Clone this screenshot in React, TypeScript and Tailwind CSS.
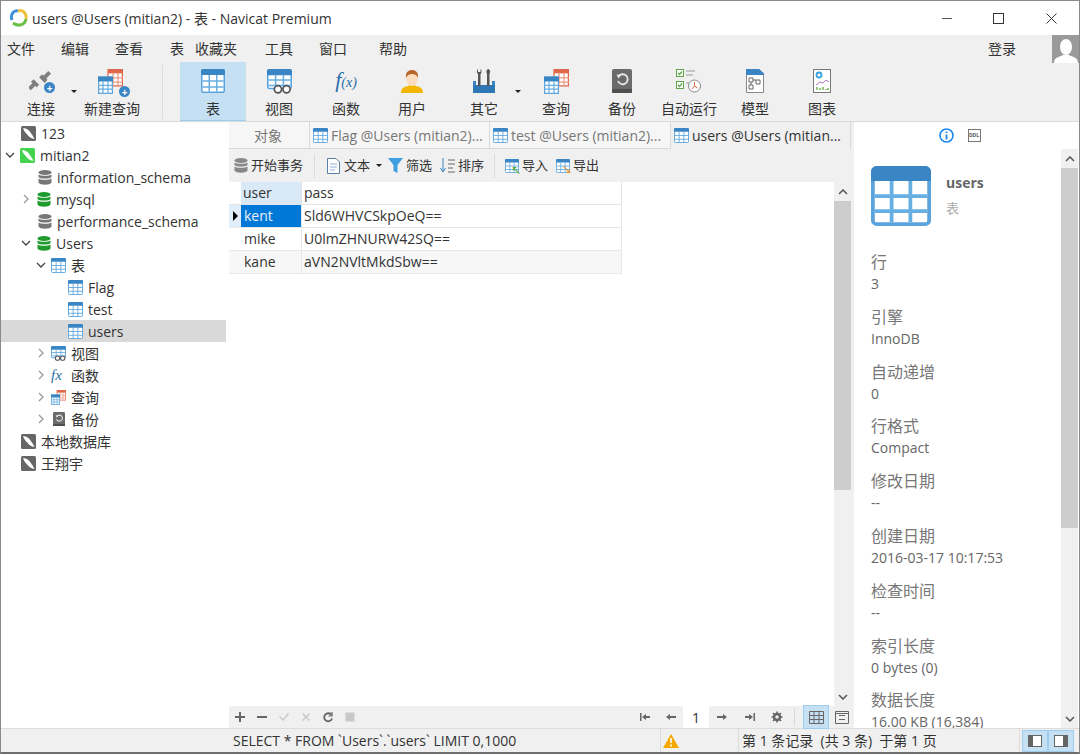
import { ReactNode } from "react";

// table grid icon, used in the tree, tabs, toolbar and info panel
function TableIcon({ size = 16, className = "" }: { size?: number; className?: string }) {
	return (
		<svg width={size} height={size} viewBox="0 0 16 16" className={className}>
			<rect x="0.5" y="0.5" width="15" height="15" rx="1" fill="#fff" stroke="#5ba3dc" />
			<path d="M0 1.5A1.5 1.5 0 0 1 1.5 0h13A1.5 1.5 0 0 1 16 1.5V4H0z" fill="#3a85c4" />
			<path d="M1 8h14M1 12h14M5.5 4v11M10.5 4v11" stroke="#67aee3" strokeWidth="1" />
		</svg>
	);
}

function ConnIcon({ on = false }: { on?: boolean }) {
	return (
		<svg width="15" height="15" viewBox="0 0 15 15">
			<rect width="15" height="15" rx="1.5" fill={on ? "#45d34f" : "#666"} />
			<path d="M2 2c4 .5 6 2 7.500 4.500 1 1.500 2.500 3 4 6.500-3-.5-5-1.500-6.500-3.500C5.500 7.500 3 6 2 2z" fill="#fff" />
		</svg>
	);
}

function DbIcon({ color }: { color: string }) {
	return (
		<svg width="14" height="15" viewBox="0 0 14 15">
			<ellipse cx="7" cy="2.500" rx="6.500" ry="2.500" fill={color} />
			<path d="M.5 4.500C2 6.300 12 6.300 13.500 4.500V7C12 9 2 9 .5 7z" fill={color} />
			<path d="M.5 8.500C2 10.300 12 10.300 13.500 8.500V12.500C12 15.500 2 15.500 .5 12.500z" fill={color} />
		</svg>
	);
}

function Chevron({ open = false }: { open?: boolean }) {
	return (
		<svg width="10" height="10" viewBox="0 0 10 10" fill="none" stroke={open ? "#444" : "#999"} strokeWidth="1.3">
			{open ? <path d="M1 3l4 4 4-4" /> : <path d="M3 1l4 4-4 4" />}
		</svg>
	);
}

function ViewIcon({ size = 16 }: { size?: number }) {
	return (
		<svg width={size} height={size} viewBox="0 0 16 16">
			<rect x="0.5" y="0.500" width="15" height="12" rx="1" fill="#fff" stroke="#5ba3dc" />
			<path d="M0 1.500A1.500 1.500 0 0 1 1.500 0h13A1.500 1.500 0 0 1 16 1.500V4H0z" fill="#3a85c4" />
			<path d="M1 7h14M1 10.500h14M5.500 4v9M10.500 4v9" stroke="#67aee3" />
			<circle cx="7" cy="13" r="2.300" fill="#fff" stroke="#555" strokeWidth="1.100" />
			<circle cx="12.500" cy="13" r="2.300" fill="#fff" stroke="#555" strokeWidth="1.100" />
		</svg>
	);
}

function QueryIcon({ size = 16 }: { size?: number }) {
	return (
		<svg width={size} height={size} viewBox="0 0 20 20">
			<rect x="8" y="0.500" width="11.500" height="13" fill="#fff" stroke="#e0684a" />
			<rect x="8" y="0" width="12" height="3.500" fill="#e0684a" />
			<path d="M8 7h12M8 10.500h12M12 3v10M16 3v10" stroke="#eb9a84" />
			<rect x="0.500" y="6.500" width="11" height="13" fill="#fff" stroke="#5ba3dc" />
			<rect x="0" y="6" width="12" height="4" fill="#3a85c4" />
			<path d="M0 13h12M0 16h12M4 10v10M8 10v10" stroke="#67aee3" />
		</svg>
	);
}

function BackupIcon({ size = 16 }: { size?: number }) {
	return (
		<svg width={size} height={size * 1.2} viewBox="0 0 20 24">
			<rect width="20" height="24" rx="2" fill="#6b6b6b" />
			<rect y="20" width="20" height="4" rx="1" fill="#4f4f4f" />
			<path d="M6.500 7.500A5 5 0 1 1 6 12" fill="none" stroke="#e8e8e8" strokeWidth="1.800" />
			<path d="M4.500 5.500l4.500.5-2.500 3.500z" fill="#e8e8e8" />
		</svg>
	);
}

function Plus() {
	return <span className="absolute -right-1 -bottom-1 flex h-[11px] w-[11px] items-center justify-center rounded-full bg-[#3a85c4] text-[10px] leading-none font-bold text-white">+</span>;
}

const big: Record<string, ReactNode> = {
	conn: (
		<span className="relative block h-6 w-6">
			<svg width="24" height="24" viewBox="0 0 24 24">
				<path d="M21 1l-5 5-2-1-3 3 6 6 3-3-1-2 5-5zM2 22l5-5 1 2 3-3-6-6-3 3 2 1-5 5z" fill="#7f7f7f" transform="translate(0 1) scale(.92)" />
			</svg>
			<span className="absolute -right-[2px] bottom-0 flex h-[11px] w-[11px] items-center justify-center rounded-full bg-[#3a85c4] text-[10px] leading-none font-bold text-white">+</span>
		</span>
	),
	newq: (
		<span className="relative block h-6 w-7">
			<QueryIcon size={25} />
			<Plus />
		</span>
	),
	table: <TableIcon size={24} />,
	view: <ViewIcon size={25} />,
	func: <span className="font-['Liberation_Serif',serif] text-[22px] leading-6 text-[#2b6ea8] italic">f<span className="text-[14px]">(x)</span></span>,
	user: (
		<svg width="24" height="24" viewBox="0 0 24 24">
			<path d="M1 24c0-5 3-6 7-7l2-1h4l2 1c4 1 7 2 7 7z" fill="#f2b705" />
			<ellipse cx="12" cy="9.500" rx="6" ry="7.500" fill="#fcdcbf" />
			<path d="M6 9C5 3 9 1 12 1s7 2 6 8c-1-3-3-4-6-4S7 6 6 9z" fill="#b8652a" />
		</svg>
	),
	other: (
		<svg width="22" height="24" viewBox="0 0 22 24">
			<path d="M0 12h3v5h16v-5h3v12H0z" fill="#3a85c4" />
			<rect x="0" y="16" width="22" height="8" fill="#2f78b5" />
			<path d="M6 0v3h-1V0C3.500 1 3.500 4 5 5v12h2.500V5C9 4 9 1 7.500 0v3H6z" fill="#555" />
			<path d="M15 0c-2 1-2 3-1 5v12h2.500V5c1-2 1-4-1-5z" fill="#555" />
		</svg>
	),
	query: <QueryIcon size={25} />,
	backup: <BackupIcon size={20} />,
	auto: (
		<svg width="26" height="24" viewBox="0 0 26 24">
			<rect x="0.500" y="0.500" width="7" height="7" fill="#fff" stroke="#5ba545" />
			<path d="M2 4l1.500 1.500L6 2.500" fill="none" stroke="#5ba545" strokeWidth="1.300" />
			<rect x="0.500" y="12.500" width="7" height="7" fill="#fff" stroke="#5ba545" />
			<path d="M2 16l1.500 1.500L6 14.500" fill="none" stroke="#5ba545" strokeWidth="1.300" />
			<path d="M10 2h9M10 6h7M10 14h3" stroke="#999" strokeWidth="1.200" />
			<circle cx="18.500" cy="17" r="6" fill="#fff" stroke="#888" />
			<path d="M18.500 13v4l-2.500 3M18.500 17l3 2" fill="none" stroke="#d9603f" />
		</svg>
	),
	model: (
		<svg width="18" height="24" viewBox="0 0 18 24">
			<path d="M.5.500H13l4.500 4v19H.5z" fill="#fff" stroke="#888" />
			<path d="M0 0h13l5 4.500V6H0z" fill="#3a85c4" />
			<path d="M3 9h4v4H3zM10 11h4v4h-4zM3 16h4v4H3zM7 11h3M5 13v3" fill="none" stroke="#666" />
		</svg>
	),
	chart: (
		<svg width="18" height="24" viewBox="0 0 18 24">
			<rect x="0.500" y="0.500" width="17" height="23" fill="#fff" stroke="#777" />
			<circle cx="6" cy="6" r="2.500" fill="none" stroke="#39a0dc" strokeWidth="1.800" />
			<path d="M3 16l4-3 3 1 3-3 3 2" fill="none" stroke="#b777c9" />
			<path d="M4 18v3M7 19v2M10 18v3M13 20v1M15 19v2" stroke="#69b04a" strokeWidth="1.400" />
		</svg>
	),
};

const toolbar = [
	{ id: "conn", label: "连接", className: "ml-[7px]" },
	{ id: "newq", label: "新建查询", className: "ml-[5px]" },
	{ id: "table", label: "表", className: "ml-[35px] bg-[#c5dff3] border-b border-[#9fcdf0]" },
	{ id: "view", label: "视图", className: "" },
	{ id: "func", label: "函数", className: "ml-px" },
	{ id: "user", label: "用户", className: "" },
	{ id: "other", label: "其它", className: "ml-[6px]" },
	{ id: "query", label: "查询", className: "ml-[6px]" },
	{ id: "backup", label: "备份", className: "" },
	{ id: "auto", label: "自动运行", className: "ml-px" },
	{ id: "model", label: "模型", className: "" },
	{ id: "chart", label: "图表", className: "ml-px" },
];

const menus = [
	{ label: "文件", className: "ml-[6px] w-[54px]" },
	{ label: "编辑", className: "w-[54px]" },
	{ label: "查看", className: "w-[55px]" },
	{ label: "表", className: "w-[25px]" },
	{ label: "收藏夹", className: "w-[70px]" },
	{ label: "工具", className: "w-[54px]" },
	{ label: "窗口", className: "w-[60px]" },
	{ label: "帮助", className: "" },
];

type TreeRow = { label: string; indent: string; chevron?: "open" | "closed"; chevX?: string; icon: ReactNode; selected?: boolean };

const tree: TreeRow[] = [
	{ label: "123", indent: "pl-[20px]", icon: <ConnIcon /> },
	{ label: "mitian2", indent: "pl-[3px]", chevron: "open", icon: <ConnIcon on /> },
	{ label: "information_schema", indent: "pl-[36px]", icon: <DbIcon color="#777" /> },
	{ label: "mysql", indent: "pl-[19px]", chevron: "closed", icon: <DbIcon color="#1f9a2c" /> },
	{ label: "performance_schema", indent: "pl-[36px]", icon: <DbIcon color="#777" /> },
	{ label: "Users", indent: "pl-[19px]", chevron: "open", icon: <DbIcon color="#1f9a2c" /> },
	{ label: "表", indent: "pl-[34px]", chevron: "open", icon: <TableIcon size={15} /> },
	{ label: "Flag", indent: "pl-[67px]", icon: <TableIcon size={15} /> },
	{ label: "test", indent: "pl-[67px]", icon: <TableIcon size={15} /> },
	{ label: "users", indent: "pl-[67px]", icon: <TableIcon size={15} />, selected: true },
	{ label: "视图", indent: "pl-[34px]", chevron: "closed", icon: <ViewIcon size={15} /> },
	{ label: "函数", indent: "pl-[34px]", chevron: "closed", icon: <span className="w-[15px] font-['Liberation_Serif',serif] text-[15px] leading-none text-[#2b6ea8] italic">fx</span> },
	{ label: "查询", indent: "pl-[34px]", chevron: "closed", icon: <QueryIcon size={15} /> },
	{ label: "备份", indent: "pl-[34px]", chevron: "closed", icon: <BackupIcon size={12} /> },
	{ label: "本地数据库", indent: "pl-[20px]", icon: <ConnIcon /> },
	{ label: "王翔宇", indent: "pl-[20px]", icon: <ConnIcon /> },
];

const rows = [
	{ user: "kent", pass: "Sld6WHVCSkpOeQ==" },
	{ user: "mike", pass: "U0lmZHNURW42SQ==" },
	{ user: "kane", pass: "aVN2NVltMkdSbw==" },
];

const info = [
	["行", "3"],
	["引擎", "InnoDB"],
	["自动递增", "0"],
	["行格式", "Compact"],
	["修改日期", "--"],
	["创建日期", "2016-03-17 10:17:53"],
	["检查时间", "--"],
	["索引长度", "0 bytes (0)"],
	["数据长度", "16.00 KB (16,384)"],
];

function Scrollbar({ thumb }: { thumb: string }) {
	return (
		<div className="flex w-[17px] shrink-0 flex-col bg-[#f0f0f0]">
			<div className="flex h-[19px] shrink-0 items-center justify-center">
				<svg width="10" height="6" viewBox="0 0 10 6" fill="none" stroke="#555" strokeWidth="1.500"><path d="M1 5l4-4 4 4" /></svg>
			</div>
			<div className={`${thumb} shrink-0 bg-[#cdcdcd]`} />
			<div className="flex-1" />
			<div className="flex h-[19px] shrink-0 items-center justify-center">
				<svg width="10" height="6" viewBox="0 0 10 6" fill="none" stroke="#555" strokeWidth="1.500"><path d="M1 1l4 4 4-4" /></svg>
			</div>
		</div>
	);
}

function SmallTool({ children, label, className = "" }: { children?: ReactNode; label: string; className?: string }) {
	return (
		<div className={`flex items-center gap-[3px] ${className}`}>
			{children}
			<span>{label}</span>
		</div>
	);
}

function Glyph({ d, className = "" }: { d: string; className?: string }) {
	return (
		<svg width="14" height="14" viewBox="0 0 14 14" className={className}>
			<path d={d} fill="currentColor" />
		</svg>
	);
}

export default function App() {
	return (
		<div className="flex h-[754px] w-[1080px] flex-col overflow-hidden border-t border-r border-l border-[#8a8a8a] border-b-2 border-b-[#6e6e6e] bg-[#f0f0f0] font-['Open_Sans','Noto_Sans_CJK_SC',sans-serif] text-[14px] text-[#333]">
			{/* title bar */}
			<div className="flex h-[34px] shrink-0 items-center bg-white pl-[8px]">
				<svg width="20" height="20" viewBox="0 0 20 20" fill="none" strokeWidth="3">
					<path d="M3 12C1 6 5 2 9 3" stroke="#3f8fe0" />
					<path d="M9 3c5-2 9 3 8 8" stroke="#f0c23c" />
					<path d="M17 11c-1 6-8 8-13 4" stroke="#6cc04a" />
				</svg>
				<span className="ml-[3px] text-[14px] text-[#333]">users @Users (mitian2) - 表 - Navicat Premium</span>
				<div className="ml-auto flex items-center">
					<div className="mr-[41px] h-px w-[10px] bg-[#555]" />
					<div className="mr-[42px] h-[11px] w-[11px] border border-[#333]" />
					<svg width="11" height="11" viewBox="0 0 11 11" stroke="#333" className="mr-[22px]"><path d="M.5.500l10 10M10.500.500l-10 10" /></svg>
				</div>
			</div>

			{/* menu */}
			<div className="relative flex h-[27px] shrink-0 items-center">
				{menus.map((m) => (
					<span key={m.label} className={m.className}>{m.label}</span>
				))}
				<span className="ml-auto mr-[36px]">登录</span>
				<div className="flex h-[28px] w-[27px] items-end justify-center overflow-hidden bg-[#9a9a9a]">
					<svg width="24" height="26" viewBox="0 0 24 26" fill="#fff"><ellipse cx="12" cy="10" rx="6" ry="8" /><path d="M0 26c0-6 6-6 9-8h6c3 2 9 2 9 8z" /></svg>
				</div>
			</div>

			{/* big toolbar */}
			<div className="relative flex h-[60px] shrink-0 items-stretch border-b border-[#d9d9d9]">
				{toolbar.map((t) => (
					<div key={t.id} className={`flex w-[66px] shrink-0 flex-col items-center ${t.className}`}>
						<div className="mt-[6px] flex h-[26px] items-center justify-center">{big[t.id]}</div>
						<span className="mt-[5px] text-[14px] leading-5 whitespace-nowrap">{t.label}</span>
					</div>
				))}
				<span className="absolute top-[28px] left-[70px] h-0 w-0 border-x-[3px] border-t-[3px] border-x-transparent border-t-[#222]" />
				<span className="absolute top-[28px] left-[514px] h-0 w-0 border-x-[3px] border-t-[3px] border-x-transparent border-t-[#222]" />
				<span className="absolute top-[3px] left-[161px] h-[54px] w-px bg-[#dcdcdc]" />
			</div>

			<div className="flex min-h-0 flex-1">
				{/* connection tree */}
				<div className="w-[225px] shrink-0 bg-white">
					{tree.map((r) => (
						<div key={r.label + r.indent} className={`flex h-[22px] items-center ${r.indent} ${r.selected ? "bg-[#d9d9d9]" : ""}`}>
							{r.chevron && <span className="mr-[5px] flex w-[11px] justify-center"><Chevron open={r.chevron === "open"} /></span>}
							<span className="flex w-[15px] shrink-0 justify-center">{r.icon}</span>
							<span className={`ml-[5px] whitespace-nowrap text-[#333] ${r.chevron && r.indent === "pl-[34px]" ? "ml-[5px]" : ""}`}>{r.label}</span>
						</div>
					))}
				</div>

				{/* main */}
				<div className="flex w-[628px] shrink-0 flex-col border-l-[3px] border-white">
					<div className="flex h-[27px] shrink-0 bg-[#f0f0f0] pr-[3px]">
						<div className="flex w-[80px] items-center justify-center border-b border-[#d9d9d9] bg-[#f6f6f6] pr-[2px] text-[#777]">对象</div>
						<div className="flex w-[180px] items-center gap-[3px] border-b border-l border-[#d9d9d9] bg-[#f6f6f6] pl-[3px] text-[#777]">
							<TableIcon size={15} />
							<span className="whitespace-nowrap">Flag @Users (mitian2)...</span>
						</div>
						<div className="flex w-[181px] items-center gap-[3px] border-b border-l border-[#d9d9d9] bg-[#f6f6f6] pl-[3px] text-[#777]">
							<TableIcon size={15} />
							<span className="whitespace-nowrap">test @Users (mitian2)...</span>
						</div>
						<div className="flex flex-1 items-center gap-[3px] border-r border-l border-[#d9d9d9] pl-[3px] text-[#333]">
							<TableIcon size={15} />
							<span className="whitespace-nowrap">users @Users (mitian...</span>
						</div>
					</div>

					<div className="flex h-[33px] shrink-0 items-center bg-[#f0f0f0] pl-[5px] text-[13px]">
						<SmallTool label="开始事务">
							<DbIcon color="#888" />
						</SmallTool>
						<span className="mx-[11px] h-[24px] w-px bg-[#dcdcdc]" />
						<SmallTool label="文本">
							<svg width="15" height="16" viewBox="0 0 15 16" fill="#fff" stroke="#5b7fa6"><path d="M1.500.500H10l3.500 3.500v11.500h-12z" /><path d="M4 6h7M4 9h7M4 12h5" stroke="#8fb3d6" /></svg>
						</SmallTool>
						<span className="mx-[6px] h-0 w-0 border-x-[3px] border-t-[3px] border-x-transparent border-t-[#222]" />
						<SmallTool label="筛选" className="mr-[8px]">
							<svg width="15" height="15" viewBox="0 0 15 15" fill="#3f9fe0"><path d="M0 0h15L9.500 7v8l-4-2V7z" /></svg>
						</SmallTool>
						<SmallTool label="排序">
							<svg width="15" height="15" viewBox="0 0 15 15" fill="none"><path d="M3 0v13M.5 10L3 14l2.500-4" stroke="#3a85c4" /><path d="M8 2h7M8 6h7M8 10h5M8 14h7" stroke="#666" /></svg>
						</SmallTool>
						<span className="mx-[10px] h-[24px] w-px bg-[#dcdcdc]" />
						<SmallTool label="导入" className="mr-[8px]">
							<span className="relative block"><TableIcon size={14} /><span className="absolute -right-[2px] -bottom-[2px] text-[10px] leading-none font-bold text-[#57a639]">↖</span></span>
						</SmallTool>
						<SmallTool label="导出">
							<span className="relative block"><TableIcon size={14} /><span className="absolute -right-[2px] -bottom-[2px] text-[10px] leading-none font-bold text-[#e8912d]">↘</span></span>
						</SmallTool>
					</div>

					{/* data grid */}
					<div className="flex min-h-0 flex-1 bg-white">
						<div className="min-w-0 flex-1">
							<div className="grid w-[393px] grid-cols-[12px_60px_321px] text-[14px] leading-[22px]">
								<div className="h-[23px] border-b border-[#e4e4e4]" />
								<div className="h-[23px] border-b border-[#e4e4e4] bg-[#d9e9f7] pl-[2px]">user</div>
								<div className="h-[23px] border-r border-b border-l border-[#e4e4e4] pl-[2px]">pass</div>
								{rows.map((r, i) => (
									<div key={r.user} className="contents">
										<div className={`flex h-[23px] items-center border-b border-[#e8e8e8] ${i === 0 ? "bg-[#e1eef9]" : i === 2 ? "bg-[#f7f7f7]" : ""}`}>
											{i === 0 && <span className="ml-[4px] h-0 w-0 border-y-[5px] border-l-[5px] border-y-transparent border-l-black" />}
										</div>
										<div className={`h-[23px] border-b border-[#e8e8e8] pl-[3px] ${i === 0 ? "bg-[#0078d7] text-[#e8f2fb]" : i === 2 ? "bg-[#f7f7f7]" : ""}`}>{r.user}</div>
										<div className={`h-[23px] border-r border-b border-l border-[#e8e8e8] pl-[2px] ${i === 2 ? "bg-[#f7f7f7]" : ""}`}>{r.pass}</div>
									</div>
								))}
							</div>
						</div>
						<Scrollbar thumb="h-[289px]" />
						<div className="w-[3px] bg-[#f0f0f0]" />
					</div>

					<div className="relative flex h-[22px] shrink-0 items-center bg-[#f0f0f0] text-[#666]">
						<div className="flex items-center gap-[8px] pl-[4px]">
							<Glyph d="M6 2h2v4h4v2H8v4H6V8H2V6h4z" />
							<Glyph d="M2 6h10v2H2z" />
							<Glyph className="text-[#c8c8c8]" d="M2 7l1-1 3 3 5-6 1 1-6 7z" />
							<Glyph className="text-[#c8c8c8]" d="M3 4l1-1 3 3 3-3 1 1-3 3 3 3-1 1-3-3-3 3-1-1 3-3z" />
							<svg width="14" height="14" viewBox="0 0 14 14" fill="none" stroke="currentColor" strokeWidth="1.800"><path d="M10.500 5A4 4 0 1 0 11 8.500" /><path d="M11 2v4H7.500" strokeWidth="1.200" /></svg>
							<Glyph className="text-[#c8c8c8]" d="M2.500 2.500h9v9h-9z" />
						</div>
						<div className="ml-auto flex items-center">
							<Glyph d="M2 3h1.500v8H2zM4 7l4-3v2h4v2H8v2z" className="mr-[12px]" />
							<Glyph d="M2 7l4-3v2h6v2H6v2z" className="mr-[5px]" />
							<span className="flex h-[22px] w-[26px] items-center justify-center bg-white text-[#333]">1</span>
							<Glyph d="M12 7L8 4v2H2v2h6v2z" className="ml-[6px]" />
							<Glyph d="M10.500 3H12v8h-1.500zM10 7L6 4v2H2v2h4v2z" className="ml-[14px]" />
							<svg width="14" height="14" viewBox="0 0 14 14" className="ml-[13px]" fill="none" stroke="currentColor"><circle cx="7" cy="7" r="3" strokeWidth="2.500" /><path d="M7 1.500v2M7 10.500v2M1.500 7h2M10.500 7h2M3 3l1.500 1.500M9.500 9.500L11 11M11 3L9.500 4.500M3 11l1.500-1.500" strokeWidth="1.500" /></svg>
							<span className="ml-[10px] h-[18px] w-px bg-[#d9d9d9]" />
							<span className="ml-[8px] flex h-[24px] w-[26px] items-center justify-center border border-[#9fcdf0] bg-[#c5dff3]">
								<svg width="15" height="13" viewBox="0 0 15 13" fill="none" stroke="#666"><path d="M.5.500h14v12H.5zM.5 4.500h14M.5 8.500h14M5 .5v12M10 .5v12" /></svg>
							</span>
							<span className="ml-[6px] mr-[5px] flex h-[24px] w-[14px] items-center justify-center">
								<svg width="14" height="13" viewBox="0 0 14 13" fill="none" stroke="#666"><path d="M.5.500h13v12H.5zM4 4.500h6M4 8.500h6M.5 2.500h13" /></svg>
							</span>
						</div>
					</div>
				</div>

				{/* info panel */}
				<div className="flex min-w-0 flex-1 flex-col bg-white">
					<div className="flex h-[27px] shrink-0 items-center justify-center gap-[14px] pr-[14px]">
						<svg width="15" height="15" viewBox="0 0 15 15" fill="none"><circle cx="7.500" cy="7.500" r="6.500" stroke="#1e88f0" strokeWidth="1.600" /><path d="M7.500 6.500v5M7.500 3.500v1.500" stroke="#1e88f0" strokeWidth="1.800" /></svg>
						<span className="flex h-[13px] w-[13px] items-center justify-center border border-[#777] text-[5px] leading-none font-bold text-[#555]">DDL</span>
					</div>
					<div className="flex min-h-0 flex-1">
						<div className="min-w-0 flex-1 overflow-hidden pl-[17px]">
							<div className="mt-[17px] flex">
								<TableIcon size={60} />
								<div className="ml-[15px] pt-[6px]">
									<div className="text-[14px] font-bold text-[#666]">users</div>
									<div className="mt-[6px] text-[13px] text-[#aaa]">表</div>
								</div>
							</div>
							<div className="mt-[25px]">
								{info.map(([k, v]) => (
									<div key={k} className="h-[54.800px]">
										<div className="text-[16px] leading-[22px] text-[#777]">{k}</div>
										<div className="text-[14px] leading-[22px] text-[#666]">{v}</div>
									</div>
								))}
							</div>
						</div>
						<Scrollbar thumb="h-[360px]" />
						<div className="w-px bg-white" />
					</div>
				</div>
			</div>

			{/* status bar */}
			<div className="flex h-[24px] shrink-0 items-center border-t border-[#dcdcdc] bg-[#f0f0f0] text-[#333]">
				<div className="w-[659px] truncate pl-[232px] text-[14px]">SELECT * FROM `Users`.`users` LIMIT 0,1000</div>
				<div className="flex h-full w-[78px] items-center border-l border-[#dcdcdc] pl-[2px]">
					<svg width="16" height="14" viewBox="0 0 16 14"><path d="M8 0l8 14H0z" fill="#f5a800" /><path d="M8 4v5M8 10.500v2" stroke="#fff" strokeWidth="1.600" /></svg>
				</div>
				<div className="flex h-full w-[281px] items-center border-l border-[#dcdcdc] pl-[3px] whitespace-pre">第 1 条记录  (共 3 条)  于第 1 页</div>
				<div className="flex h-full flex-1 items-center border-l border-[#dcdcdc] pl-[2px]">
					<span className="flex h-[22px] w-[26px] items-center justify-center border border-[#9fcdf0] bg-[#c5dff3]">
						<svg width="14" height="12" viewBox="0 0 14 12"><rect x="0.500" y="0.500" width="13" height="11" fill="#fff" stroke="#666" /><rect x="1" y="1" width="4" height="10" fill="#666" /></svg>
					</span>
					<span className="flex h-[22px] w-[26px] items-center justify-center border border-[#9fcdf0] bg-[#c5dff3]">
						<svg width="14" height="12" viewBox="0 0 14 12"><rect x="0.500" y="0.500" width="13" height="11" fill="#fff" stroke="#666" /><rect x="9" y="1" width="4" height="10" fill="#666" /></svg>
					</span>
				</div>
			</div>
		</div>
	);
}
